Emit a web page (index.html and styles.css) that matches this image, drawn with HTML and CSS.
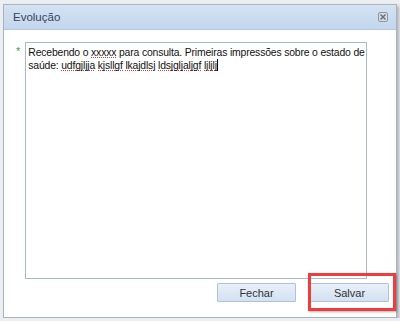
FILE: index.html
```html
<!DOCTYPE html>
<html lang="pt">
<head>
  <meta charset="UTF-8" />
  <title>Evolução</title>
  <link rel="stylesheet" href="styles.css">
</head>
<body>
  <!-- DIALOG -->
  <div class="dialog">
    <div class="dialog-header">
      <span class="dialog-title">Evolução</span>
      <span class="dialog-close">
        <svg width="10" height="10" viewBox="0 0 10 10">
          <rect x="0.5" y="0.5" width="9" height="9" rx="1.5" fill="#d6dde6" stroke="#8a96a4"/>
          <path d="M2.5 2.5 L7.5 7.5 M7.5 2.5 L2.5 7.5" stroke="#6c7683" stroke-width="1.6"/>
        </svg>
      </span>
    </div>

    <div class="dialog-body">
      <div class="field-row">
        <span class="required">*</span>
        <div class="field">Recebendo o <span class="typo">xxxxx</span> para consulta. Primeiras impressões sobre o estado de saúde: <span class="typo">udfgjljja</span> <span class="typo">kjsllgf</span> <span class="typo">lkajdlsj</span> <span class="typo">ldsjgljaljgf</span> <span class="typo">ljljlj</span><span class="caret"></span></div>
      </div>

      <div class="buttons">
        <button class="btn">Fechar</button>
        <button class="btn">Salvar</button>
      </div>
    </div>

    <!-- highlight around Salvar -->
    <div class="highlight"></div>
  </div>
</body>
</html>
```

FILE: styles.css
```css
/* ———————————————————————————————— */
/* BASE */
/* ———————————————————————————————— */
body {
  margin: 0;
  background: #eceef1;
  font-family: 'Liberation Sans', Arial, sans-serif;
  font-size: 11px;
  color: #222;
}

/* ———————————————————————————————— */
/* DIALOG */
/* ———————————————————————————————— */
.dialog {
  position: relative;
  margin: 4px 0 0 3px;
  width: 392px;
  height: 312px;
  background: #fff;
  border: 1px solid #a9b4c2;
  box-shadow: 2px 2px 3px rgba(0, 0, 0, 0.25);
  display: flex;
  flex-direction: column;
}
.dialog-header {
  height: 24px;
  display: flex;
  align-items: center;
  justify-content: space-between;
  padding: 0 8px 0 9px;
  background: linear-gradient(#d4e2f2, #c3d6ed);
  border-bottom: 1px solid #b7c9df;
}
.dialog-title {
  font-size: 11.5px;
  color: #34455a;
}
.dialog-close { display: flex; }

.dialog-body {
  flex: 1;
  display: flex;
  flex-direction: column;
  padding: 12px 0 0 12px;
}

/* text field + required mark */
.field-row {
  display: flex;
  gap: 5px;
}
.required {
  color: #3ca43c;
  font-size: 11px;
  line-height: 13px;
  padding-top: 3px;
}
.field {
  width: 338px;
  height: 229px;
  border: 1px solid #a9b8cf;
  padding: 3px 0 3px 2px;
  line-height: 13px;
  font-size: 10.4px;
  letter-spacing: -0.16px;
  color: #111;
}
/* spell-check squiggle */
.typo {
  background-image: linear-gradient(90deg, #e23a3a 50%, transparent 50%);
  background-size: 2px 1px;
  background-repeat: repeat-x;
  background-position: 0 100%;
}
.caret {
  display: inline-block;
  width: 1px;
  height: 12px;
  background: #000;
  vertical-align: -2px;
}

/* ———————————————————————————————— */
/* BUTTONS */
/* ———————————————————————————————— */
.buttons {
  display: flex;
  justify-content: flex-end;
  gap: 14px;
  padding: 4px 7px 0 0;
}
.btn {
  width: 79px;
  height: 19px;
  padding: 0;
  font-family: inherit;
  font-size: 11px;
  color: #333;
  background: linear-gradient(#e9f0f9, #d3e1f2);
  border: 1px solid #aec2dc;
  border-radius: 1px;
}

/* red annotation box */
.highlight {
  position: absolute;
  left: 304px;
  top: 268px;
  width: 82px;
  height: 32px;
  border: 3px solid #f03c3c;
  box-shadow: 1px 1px 2px rgba(0, 0, 0, 0.3);
}
```
